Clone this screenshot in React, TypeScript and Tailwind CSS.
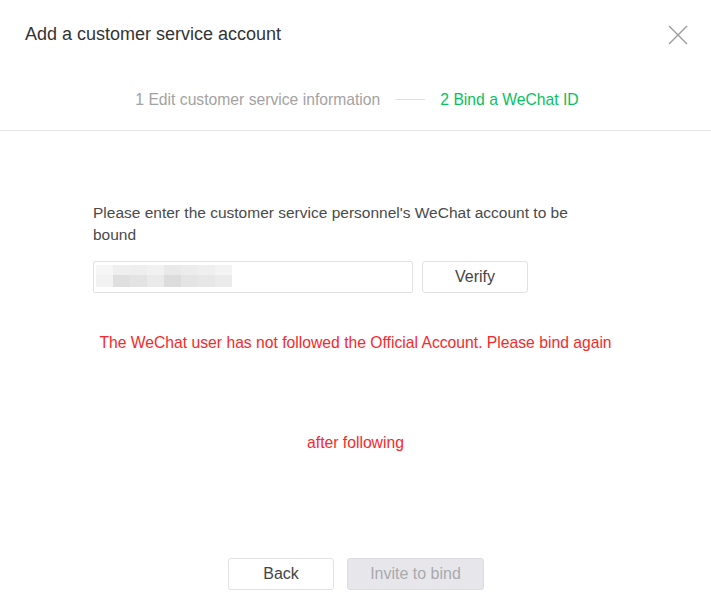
import React from "react";

const font = { fontFamily: '"Liberation Sans", Arial, sans-serif' };

// pixelated (mosaic) account name inside the input
const mosaic = [
  ["bg-[#f6f6f6]", "bg-[#efefef]", "bg-[#eeeeee]", "bg-[#f1f1f1]", "bg-[#e9e9e9]", "bg-[#ececec]", "bg-[#efefef]", "bg-[#f3f3f3]"],
  ["bg-[#f2f2f2]", "bg-[#dfdfdf]", "bg-[#e3e3e3]", "bg-[#eaeaea]", "bg-[#dcdcdc]", "bg-[#e4e4e4]", "bg-[#e7e7e7]", "bg-[#ebebeb]"],
];

export default function App() {
  return (
    <div className="w-[711px] h-[613px] bg-white flex flex-col text-[#353535]" style={font}>
      <div className="flex items-center justify-between h-[69px] pl-[25px] pr-[22px]">
        <h1 className="text-[18px] text-[#333]">Add a customer service account</h1>
        <button className="w-[22px] h-[22px] flex items-center justify-center text-[#999]">
          <svg width="20" height="20" viewBox="0 0 20 20" fill="none" stroke="currentColor" strokeWidth="1.3">
            <path d="M1 1 L19 19 M19 1 L1 19" />
          </svg>
        </button>
      </div>

      <div className="flex items-center justify-center h-[62px] border-b border-[#e5e5e5] text-[15.7px] pl-[3px]">
        <span className="text-[#a3a3a3]">1 Edit customer service information</span>
        <span className="mx-[15px] w-[30px] h-px bg-[#e0e0e0]" />
        <span className="text-[#07c160]">2 Bind a WeChat ID</span>
      </div>

      <div className="flex flex-col flex-1 pt-[71px]">
        <div className="pl-[93px] w-[600px]">
          <p className="text-[15.5px] leading-[22px] text-[#4a4a4a] w-[500px]">
            Please enter the customer service personnel's WeChat account to be bound
          </p>
          <div className="flex items-center gap-[9px] mt-[15px]">
            <div className="relative w-[320px] h-[32px] border border-[#e2e2e2] rounded-[2px]">
              <div className="absolute left-[2px] top-[3px] flex flex-col">
                {mosaic.map((row, i) => (
                  <div key={i} className="flex">
                    {row.map((c, j) => (
                      <div key={j} className={`w-[17px] ${i === 0 ? "h-[10px]" : "h-[12px]"} ${c}`} />
                    ))}
                  </div>
                ))}
              </div>
            </div>
            <button className="w-[106px] h-[32px] border border-[#e2e2e2] rounded-[3px] text-[16px] text-[#444]">
              Verify
            </button>
          </div>
        </div>

        <p className="mt-[38px] mx-auto w-[525px] text-center text-[15.7px] leading-[100px] text-[#fa2828] -translate-y-[38px]">
          The WeChat user has not followed the Official Account. Please bind again after following
        </p>

        <div className="mt-auto mb-[23px] flex justify-center gap-[13px] pl-[1px]">
          <button className="w-[106px] h-[32px] border border-[#e2e2e2] rounded-[3px] text-[16px] text-[#444] bg-white">
            Back
          </button>
          <button className="w-[137px] h-[32px] border border-[#dcdce0] rounded-[3px] text-[16px] text-[#a9a9ae] bg-[#e7e7eb]">
            Invite to bind
          </button>
        </div>
      </div>
    </div>
  );
}
